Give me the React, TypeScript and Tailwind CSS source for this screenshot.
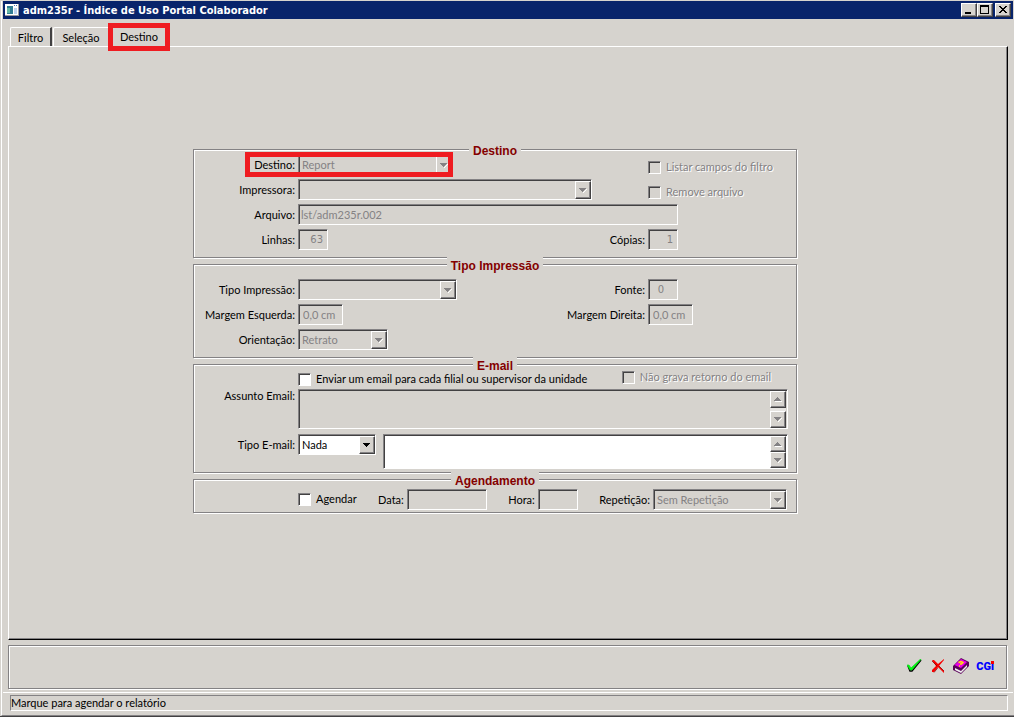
import React, { useId } from 'react';

const sunken =
  'border border-t-[#848284] border-l-[#848284] border-r-white border-b-white shadow-[inset_1px_1px_0_#424142]';
const raised =
  'border border-t-white border-l-white border-r-[#424142] border-b-[#424142] shadow-[inset_-1px_-1px_0_#848284] bg-[#d6d3ce]';
const etched = 'border border-[#848284] shadow-[inset_1px_1px_0_#fff,1px_1px_0_#fff]';

function Arrow({ up = false, active = false }: { up?: boolean; active?: boolean }) {
  return (
    <svg width="8" height="5" viewBox="0 0 8 5" shapeRendering="crispEdges" aria-hidden="true">
      {!active && <path d={up ? 'M1 4h7v1h-7z' : 'M7 1h1v1h-1v1h-1v1h-1v1h-1v-1z'} fill="#fff" />}
      <path
        d={up ? 'M3 0h1v1h1v1h1v1h1v1H0v-1h1v-1h1v-1h1z' : 'M0 0h7v1h-1v1h-1v1h-1v1h-1v-1h-1v-1h-1v-1H0z'}
        fill={active ? '#000' : '#848284'}
      />
    </svg>
  );
}

function Label({ htmlFor, children }: { htmlFor: string; children: React.ReactNode }) {
  return (
    <label htmlFor={htmlFor} className="text-right whitespace-nowrap">
      {children}
    </label>
  );
}

function Select({ id, value, width, active = false }: { id: string; value: string; width: string; active?: boolean }) {
  return (
    <div className={`relative h-[21px] ${width} ${sunken} ${active ? 'bg-white' : ''}`}>
      <select
        id={id}
        disabled={!active}
        className={`block h-full w-full appearance-none bg-transparent pb-px pl-[3px] opacity-100 outline-none ${
          active ? 'text-black' : 'text-[#848284]'
        }`}
      >
        <option>{value}</option>
      </select>
      <span
        className={`pointer-events-none absolute top-px right-0 bottom-0 flex w-4 items-center justify-center ${raised}`}
      >
        <Arrow active={active} />
      </span>
    </div>
  );
}

function Input({ id, value = '', className = '' }: { id: string; value?: string; className?: string }) {
  return (
    <input
      id={id}
      disabled
      defaultValue={value}
      className={`h-[21px] bg-transparent pb-px text-[#848284] outline-none ${sunken} ${className}`}
    />
  );
}

function Check({ label, disabled = false }: { label: string; disabled?: boolean }) {
  const id = useId();
  return (
    <div className="flex h-[13px] items-center gap-[5px]">
      <input
        id={id}
        type="checkbox"
        disabled={disabled}
        className={`size-[13px] shrink-0 appearance-none ${sunken} ${disabled ? '' : 'bg-white'}`}
      />
      <label
        htmlFor={id}
        className={`pb-[2px] whitespace-nowrap ${disabled ? 'text-[#848284] [text-shadow:1px_1px_0_#fff]' : ''}`}
      >
        {label}
      </label>
    </div>
  );
}

function Area({ id, label, height, active = false }: { id: string; label?: string; height: string; active?: boolean }) {
  const button = `flex w-4 items-center justify-center ${raised} ${active ? 'h-4' : 'h-[17px]'}`;
  return (
    <div className={`flex flex-1 ${height} ${sunken} ${active ? 'bg-white' : ''}`}>
      <textarea
        id={id}
        aria-label={label}
        disabled={!active}
        className="block h-full min-w-0 flex-1 resize-none bg-transparent p-1 outline-none"
      />
      <div className="mt-px mr-px flex flex-col justify-between bg-[#e7e5e2]">
        <button type="button" disabled aria-label="Rolar para cima" className={button}>
          <Arrow up />
        </button>
        <button type="button" disabled aria-label="Rolar para baixo" className={button}>
          <Arrow />
        </button>
      </div>
    </div>
  );
}

function Group({ title, className, children }: { title: string; className: string; children: React.ReactNode }) {
  return (
    <section className={`relative flex flex-col ${etched} ${className}`}>
      <div className="-my-2 flex h-4 justify-center">
        <h2 className="bg-[#d6d3ce] px-1 pt-px font-['Liberation_Sans',Arial,sans-serif] text-[12px] leading-4 font-bold text-[#840000]">
          {title}
        </h2>
      </div>
      {children}
    </section>
  );
}

function Row({ id, label, field, label2, right }: {
  id: string;
  label: string;
  field: React.ReactNode;
  label2?: React.ReactNode;
  right?: React.ReactNode;
}) {
  return (
    <div className="grid h-[21px] grid-cols-[101px_1fr_148px] items-center gap-x-[3px]">
      <Label htmlFor={id}>{label}</Label>
      <div className="flex items-center justify-between">
        {field}
        {label2}
      </div>
      {right}
    </div>
  );
}

function App() {
  return (
    <div className="flex min-h-screen flex-col border-b border-[#424142] bg-[#d6d3ce] pt-px pl-px font-[Lato,'Liberation_Sans',sans-serif] text-[11px] leading-[13px] text-black">
      <div className="flex flex-1 flex-col border-b border-l border-b-[#848284] border-l-white pr-px pl-px">
        <header className="flex h-[18px] items-center bg-[#08246b] pr-[2px] pl-[2px]">
          <svg width="15" height="14" viewBox="0 0 15 14" shapeRendering="crispEdges" aria-hidden="true">
            <path fill="#fff" d="M0 1h14v12H0z" />
            <path fill="#9c9a9c" d="M0 12h14v1H0zM13 1h1v12h-1z" />
            <path fill="#317d94" d="M2 3h6v8H2z" />
            <path fill="#63b6a5" d="M2 5h3v5H2z" />
            <path fill="#4a75b5" d="M9 2h1v1H9zM11 2h1v1h-1z" />
            <path fill="#bdd3ef" d="M9 5h3v6H9z" />
          </svg>
          <h1 className="flex-1 pl-[3px] font-['DejaVu_Sans_Condensed','Noto_Sans',sans-serif] text-[11px] font-bold whitespace-nowrap text-white">
            adm235r - Índice de Uso Portal Colaborador
          </h1>
          <div className="flex">
            <button type="button" aria-label="Minimizar" className={`h-[14px] w-4 ${raised}`}>
              <svg width="14" height="12" viewBox="0 0 14 12" shapeRendering="crispEdges">
                <path d="M3 8h6v2H3z" />
              </svg>
            </button>
            <button type="button" aria-label="Maximizar" className={`h-[14px] w-4 ${raised}`}>
              <svg width="14" height="12" viewBox="0 0 14 12" shapeRendering="crispEdges">
                <path fillRule="evenodd" d="M2 1h9v9H2zM3 3v6h7V3z" />
              </svg>
            </button>
            <button type="button" aria-label="Fechar" className={`ml-[2px] h-[14px] w-4 ${raised}`}>
              <svg width="14" height="12" viewBox="0 0 14 12" shapeRendering="crispEdges">
                <path d="M3 2h2v1h1v1h2v-1h1v-1h2v1h-1v1h-1v1h-1v1h1v1h1v1h1v1h-2v-1h-1v-1h-2v1h-1v1h-2v-1h1v-1h1v-1h1v-1h-1v-1h-1v-1h-1z" />
              </svg>
            </button>
          </div>
        </header>

        <main className="flex flex-1 flex-col pr-[5px] pl-[5px]">
          <nav className="flex h-[27px] items-end pl-[2px]">
            <button
              type="button"
              className="h-[19px] w-[42px] rounded-tl-[2px] border-t border-r-2 border-l border-white border-r-[#424142]"
            >
              Filtro
            </button>
            <button
              type="button"
              className="ml-px h-[19px] w-[55px] rounded-tl-[2px] border-t border-l border-white"
            >
              Seleção
            </button>
            <button
              type="button"
              className="relative z-10 -mb-[5px] h-7 w-[62px] border-5 border-[#ef1c21] bg-[#d6d3ce] pb-[2px]"
            >
              Destino
            </button>
          </nav>

          <div className="flex-1 border border-t-white border-r-black border-b-black border-l-white pt-[102px] pr-[26px] shadow-[inset_-1px_-1px_0_#848284]">
            <form className="mx-auto flex w-[604px] flex-col gap-[6px]">
              <Group title="Destino" className="pb-[7px]">
                <div className="flex flex-col gap-1 pt-1">
                  <Row
                    id="destino"
                    label="Destino:"
                    field={<Select id="destino" value="Report" width="w-[155px]" />}
                    right={
                      <div className="pt-[6px]">
                        <Check label="Listar campos do filtro" disabled />
                      </div>
                    }
                  />
                  <Row
                    id="impressora"
                    label="Impressora:"
                    field={<Select id="impressora" value="" width="w-[294px]" />}
                    right={
                      <div className="pt-[6px]">
                        <Check label="Remove arquivo" disabled />
                      </div>
                    }
                  />
                  <div className="grid grid-cols-[101px_380px] items-center gap-x-[3px]">
                    <Label htmlFor="arquivo">Arquivo:</Label>
                    <Input id="arquivo" value="lst/adm235r.002" className="w-full pl-[2px]" />
                  </div>
                  <Row
                    id="linhas"
                    label="Linhas:"
                    field={
                      <Input
                        id="linhas"
                        value="63"
                        className="w-[30px] pr-1 text-right font-['DejaVu_Sans',sans-serif] text-[10px]"
                      />
                    }
                    label2={<Label htmlFor="copias">Cópias:</Label>}
                    right={
                      <Input
                        id="copias"
                        value="1"
                        className="w-[30px] pr-1 text-right font-['DejaVu_Sans',sans-serif] text-[10px]"
                      />
                    }
                  />
                </div>
                <span className="pointer-events-none absolute top-[2px] left-[51px] h-[25px] w-[208px] border-5 border-[#ef1c21]" />
              </Group>

              <Group title="Tipo Impressão" className="pb-[7px]">
                <div className="flex flex-col gap-1 pt-[14px]">
                  <Row
                    id="tipo-impressao"
                    label="Tipo Impressão:"
                    field={<Select id="tipo-impressao" value="" width="w-[159px]" />}
                    label2={<Label htmlFor="fonte">Fonte:</Label>}
                    right={
                      <Input
                        id="fonte"
                        value="0"
                        className="w-[30px] pr-1 text-center font-['DejaVu_Sans',sans-serif] text-[10px]"
                      />
                    }
                  />
                  <Row
                    id="margem-esquerda"
                    label="Margem Esquerda:"
                    field={<Input id="margem-esquerda" value="0,0 cm" className="w-[45px] pl-[4px]" />}
                    label2={<Label htmlFor="margem-direita">Margem Direita:</Label>}
                    right={<Input id="margem-direita" value="0,0 cm" className="w-[45px] pl-[4px]" />}
                  />
                  <Row
                    id="orientacao"
                    label="Orientação:"
                    field={<Select id="orientacao" value="Retrato" width="w-[90px]" />}
                  />
                </div>
              </Group>

              <Group title="E-mail" className="pb-[3px]">
                <div className="flex h-6 items-start justify-between pt-[6px] pr-[25px] pl-[104px]">
                  <div className="pt-[2px]">
                    <Check label="Enviar um email para cada filial ou supervisor da unidade" />
                  </div>
                  <Check label="Não grava retorno do email" disabled />
                </div>
                <div className="flex flex-col gap-[5px] pr-[8px]">
                  <div className="grid grid-cols-[101px_1fr] gap-x-[3px]">
                    <Label htmlFor="assunto">Assunto Email:</Label>
                    <Area id="assunto" height="h-10" />
                  </div>
                  <div className="grid grid-cols-[101px_78px_1fr] gap-x-[3px]">
                    <div className="flex h-[21px] items-center justify-end">
                      <Label htmlFor="tipo-email">Tipo E-mail:</Label>
                    </div>
                    <Select id="tipo-email" value="Nada" width="w-full" active />
                    <div className="flex pl-1">
                      <Area id="destinatarios" label="E-mail" height="h-[35px]" active />
                    </div>
                  </div>
                </div>
              </Group>

              <Group title="Agendamento" className="pb-[2px]">
                <div className="flex items-center justify-between pt-[9px] pr-[9px] pl-[104px]">
                  <Check label="Agendar" />
                  <div className="flex items-center gap-[3px]">
                    <Label htmlFor="data">Data:</Label>
                    <Input id="data" className="w-20" />
                  </div>
                  <div className="flex items-center gap-[3px]">
                    <Label htmlFor="hora">Hora:</Label>
                    <Input id="hora" className="w-10" />
                  </div>
                  <div className="flex items-center gap-[3px]">
                    <Label htmlFor="repeticao">Repetição:</Label>
                    <Select id="repeticao" value="Sem Repetição" width="w-[134px]" />
                  </div>
                </div>
              </Group>
            </form>
          </div>

          <div className={`mt-[5px] mr-px flex h-11 items-center justify-end gap-[7px] pr-3 pb-[2px] ${etched}`}>
            <button type="button" aria-label="Confirmar">
              <svg width="16" height="16" viewBox="0 0 16 16" aria-hidden="true">
                <path d="M1 8l2 5h2L14 2" fill="none" stroke="#000" strokeWidth="1.5" />
                <path d="M0 7h2l2 3L13 1.500l1 0L5 12H3z" fill="#00ff10" stroke="#00d610" strokeWidth="0.6" />
              </svg>
            </button>
            <button type="button" aria-label="Cancelar">
              <svg width="16" height="16" viewBox="0 0 16 16" aria-hidden="true">
                <path d="M2 2h2l4 4 6-5v1L9 8l5 5v2L8 9l-4 5H2v-2l4-4z" fill="#f70000" />
                <path d="M2 3l5 5M8 9.500L4 14.500M9 8l5 5" fill="none" stroke="#940000" strokeWidth="0.8" />
              </svg>
            </button>
            <button type="button" aria-label="Ajuda">
              <svg width="16" height="16" viewBox="0 0 16 16" aria-hidden="true">
                <path d="M0 8L8 0l8 4v4l-8 8-8-4z" fill="#5a005a" />
                <path d="M1.500 7L8 1l6 3-6 6z" fill="#e700e7" />
                <path d="M2 10l6 3 6-6v2L8 15l-6-3z" fill="#efefef" />
                <path d="M5.500 4.500L8 3.500l2 1-1.500 1.500L7 6M6 8h1" fill="none" stroke="#ffe700" strokeWidth="1.400" />
              </svg>
            </button>
            <button
              type="button"
              className="relative font-[Roboto,'Liberation_Sans',sans-serif] text-[11px] font-black text-[#0000ff]"
            >
              CGi
              <span className="absolute top-px right-0 size-[3px] bg-[#f70000]" />
            </button>
          </div>
        </main>

        <footer className="mt-[3px] border-t border-white pt-[2px] pr-[5px] pb-1 pl-[7px]">
          <p className="h-4 border border-t-[#848284] border-r-white border-b-white border-l-[#848284] leading-[14px]">
            Marque para agendar o relatório
          </p>
        </footer>
      </div>
    </div>
  );
}

export default App;
